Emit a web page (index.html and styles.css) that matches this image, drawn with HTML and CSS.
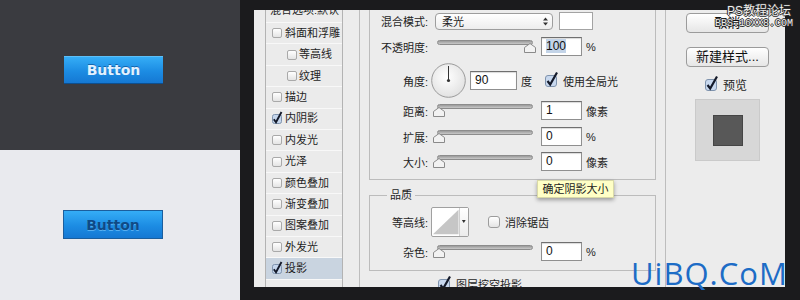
FILE: index.html
```html
<!DOCTYPE html>
<html lang="zh-CN">
<head>
    <meta charset="UTF-8">
    <meta name="viewport" content="width=device-width, initial-scale=1.0">
    <title>图层样式 - 投影</title>
    <link rel="stylesheet" href="styles.css">
</head>
<body>

<div class="page">

    <!-- Button previews -->
    <div class="demo">
        <div class="demo-dark"><button class="btn btn-dark">Button</button></div>
        <div class="demo-light"><button class="btn btn-light">Button</button></div>
    </div>

    <!-- Layer style dialog -->
    <div class="stage">
        <div class="dialog">

            <ul class="styles-list">
                <li class="list-head">混合选项:默认</li>
                <li><span class="cb"></span>斜面和浮雕</li>
                <li class="sub"><span class="cb"></span>等高线</li>
                <li class="sub"><span class="cb"></span>纹理</li>
                <li><span class="cb"></span>描边</li>
                <li><svg class="cb-on" width="10" height="10" viewBox="0 0 10 10"><rect x="0.5" y="0.5" width="9" height="9" rx="2" fill="#c5d6ec" stroke="#7f93ad"/><path d="M1.8 5.2 L4 8.2 L9.5 -2" fill="none" stroke="#141a2a" stroke-width="1.9"/></svg>内阴影</li>
                <li><span class="cb"></span>内发光</li>
                <li><span class="cb"></span>光泽</li>
                <li><span class="cb"></span>颜色叠加</li>
                <li><span class="cb"></span>渐变叠加</li>
                <li><span class="cb"></span>图案叠加</li>
                <li><span class="cb"></span>外发光</li>
                <li class="selected"><svg class="cb-on" width="10" height="10" viewBox="0 0 10 10"><rect x="0.5" y="0.5" width="9" height="9" rx="2" fill="#c5d6ec" stroke="#7f93ad"/><path d="M1.8 5.2 L4 8.2 L9.5 -2" fill="none" stroke="#141a2a" stroke-width="1.9"/></svg>投影</li>
                <li></li>
            </ul>

            <div class="vline"></div>

            <div class="main">
                <!-- 结构 -->
                <div class="group group-structure">
                    <div class="row row-mode">
                        <span class="label">混合模式:</span>
                        <div class="select">
                            <span>柔光</span>
                            <svg width="5" height="9" viewBox="0 0 5 9"><path d="M0 3.5 L2.5 0.5 L5 3.5 Z M0 5.5 L2.5 8.5 L5 5.5 Z" fill="#333"/></svg>
                        </div>
                        <span class="swatch"></span>
                    </div>
                    <div class="row row-opacity">
                        <span class="label">不透明度:</span>
                        <div class="slider">
                            <div class="track"></div>
                            <svg class="thumb thumb-end" width="12" height="10" viewBox="0 0 12 10"><path d="M0.5 9.5 V4.5 L6 0.5 L11.5 4.5 V9.5 Z" fill="#f2f2f2" stroke="#8a8a8a"/></svg>
                        </div>
                        <div class="field"><span class="selection">100</span></div>
                        <span class="unit">%</span>
                    </div>
                    <div class="row row-angle">
                        <span class="label">角度:</span>
                        <svg class="dial" width="35" height="35" viewBox="0 0 35 35">
                            <defs>
                                <radialGradient id="dialFill" cx="0.45" cy="0.4" r="0.6">
                                    <stop offset="0" stop-color="#ffffff"/>
                                    <stop offset="1" stop-color="#e2e2e2"/>
                                </radialGradient>
                            </defs>
                            <circle cx="17.5" cy="17.5" r="16.8" fill="url(#dialFill)" stroke="#9b9b9b"/>
                            <line x1="17.5" y1="17.5" x2="17.5" y2="3" stroke="#333" stroke-width="1"/>
                            <circle cx="17.5" cy="17.5" r="1.6" fill="#333"/>
                        </svg>
                        <div class="field field-angle">90</div>
                        <span class="unit">度</span>
                        <svg class="check check-global" width="13" height="13" viewBox="0 0 13 13"><rect x="0.5" y="1.5" width="11" height="11" rx="2.5" fill="#c8d8ee" stroke="#7f93ad"/><path d="M2.5 7 L5.2 10.5 L12 -1.5" fill="none" stroke="#141a2a" stroke-width="2.2"/></svg>
                        <span class="check-text">使用全局光</span>
                    </div>
                    <div class="row row-distance">
                        <span class="label">距离:</span>
                        <div class="slider">
                            <div class="track"></div>
                            <svg class="thumb" width="12" height="10" viewBox="0 0 12 10"><path d="M0.5 9.5 V4.5 L6 0.5 L11.5 4.5 V9.5 Z" fill="#f2f2f2" stroke="#8a8a8a"/></svg>
                        </div>
                        <div class="field">1</div>
                        <span class="unit">像素</span>
                    </div>
                    <div class="row row-spread">
                        <span class="label">扩展:</span>
                        <div class="slider">
                            <div class="track"></div>
                            <svg class="thumb" width="12" height="10" viewBox="0 0 12 10"><path d="M0.5 9.5 V4.5 L6 0.5 L11.5 4.5 V9.5 Z" fill="#f2f2f2" stroke="#8a8a8a"/></svg>
                        </div>
                        <div class="field">0</div>
                        <span class="unit">%</span>
                    </div>
                    <div class="row row-size">
                        <span class="label">大小:</span>
                        <div class="slider">
                            <div class="track"></div>
                            <svg class="thumb" width="12" height="10" viewBox="0 0 12 10"><path d="M0.5 9.5 V4.5 L6 0.5 L11.5 4.5 V9.5 Z" fill="#f2f2f2" stroke="#8a8a8a"/></svg>
                        </div>
                        <div class="field">0</div>
                        <span class="unit">像素</span>
                    </div>
                </div>

                <!-- 品质 -->
                <div class="group group-quality">
                    <span class="legend">品质</span>
                    <div class="row row-contour">
                        <span class="label">等高线:</span>
                        <div class="contour">
                            <svg width="29" height="28" viewBox="0 0 29 28"><path d="M1 27 L28 1 V27 Z" fill="#c6c6c6"/></svg>
                            <svg class="contour-arrow" width="8" height="28" viewBox="0 0 8 28"><path d="M2 12 H6 L4 15 Z" fill="#333"/></svg>
                        </div>
                        <span class="cb cb-main"></span>
                        <span class="check-text">消除锯齿</span>
                    </div>
                    <div class="row row-noise">
                        <span class="label">杂色:</span>
                        <div class="slider">
                            <div class="track"></div>
                            <svg class="thumb" width="12" height="10" viewBox="0 0 12 10"><path d="M0.5 9.5 V4.5 L6 0.5 L11.5 4.5 V9.5 Z" fill="#f2f2f2" stroke="#8a8a8a"/></svg>
                        </div>
                        <div class="field">0</div>
                        <span class="unit">%</span>
                    </div>
                </div>

                <div class="knockout">
                    <svg class="check" width="13" height="13" viewBox="0 0 13 13"><rect x="0.5" y="1.5" width="11" height="11" rx="2.5" fill="#c8d8ee" stroke="#7f93ad"/><path d="M2.5 7 L5.2 10.5 L12 -1.5" fill="none" stroke="#141a2a" stroke-width="2.2"/></svg>
                    <span class="check-text">图层挖空投影</span>
                </div>

                <div class="tooltip">确定阴影大小</div>
            </div>

            <div class="vline"></div>

            <div class="side">
                <button class="side-btn">取消</button>
                <button class="side-btn">新建样式...</button>
                <div class="preview-check">
                    <svg class="check" width="13" height="13" viewBox="0 0 13 13"><rect x="0.5" y="1.5" width="11" height="11" rx="2.5" fill="#c8d8ee" stroke="#7f93ad"/><path d="M2.5 7 L5.2 10.5 L12 -1.5" fill="none" stroke="#141a2a" stroke-width="2.2"/></svg>
                    <span class="check-text">预览</span>
                </div>
                <div class="preview-box"><div class="preview-swatch"></div></div>
            </div>
        </div>

        <div class="mark-top">
            <div class="mark-title">PS教程论坛</div>
            <div class="mark-url">BBS.16XX8.COM</div>
        </div>
        <div class="mark-bottom">UiBQ.CoM</div>
    </div>

</div>

</body>
</html>
```

FILE: styles.css
```css
body {
    margin: 0;
    font-family: "Liberation Sans", "Noto Sans CJK SC", sans-serif;
    font-size: 11px;
    color: #1e1e1e;
}
.page {
    display: flex;
    width: 800px;
    height: 300px;
    overflow: hidden;
}

/* left: button previews */
.demo {
    width: 240px;
    flex-shrink: 0;
}
.demo-dark {
    height: 150px;
    box-sizing: border-box;
    padding: 56px 0 0 64px;
    background: #3a3b40;
}
.demo-light {
    height: 150px;
    box-sizing: border-box;
    padding: 60px 0 0 63px;
    background: #e9eaee;
}
.btn {
    display: block;
    padding: 0;
    font: bold 14px "DejaVu Sans", sans-serif;
    background: linear-gradient(#35adf6, #1c8ce3 55%, #1578d3);
    cursor: pointer;
}
.btn-dark {
    width: 99px;
    height: 28px;
    color: #e2f1ff;
    border: none;
    border-top: 1px solid #5dbff8;
    border-bottom: 1px solid #0d4f8f;
    text-shadow: 0 -1px 0 rgba(0, 50, 110, 0.5);
}
.btn-light {
    width: 100px;
    height: 29px;
    color: #0f4a86;
    border: 1px solid #1b5e9d;
    text-shadow: 0 1px 0 rgba(130, 205, 255, 0.6);
}

/* right: dialog */
.stage {
    position: relative;
    width: 560px;
    height: 300px;
    box-sizing: border-box;
    padding: 10px 15px 13px 14px;
    background: #1b1b1d;
}
.dialog {
    display: flex;
    height: 277px;
    background: #ececec;
    overflow: hidden;
}
.styles-list {
    list-style: none;
    width: 78px;
    margin: -9px 16px 0 11px;
    padding: 0;
    box-sizing: border-box;
    flex-shrink: 0;
    background: #ebebeb;
    border-left: 1px solid #b3b3b3;
    border-right: 1px solid #b3b3b3;
}
.styles-list li {
    display: flex;
    align-items: center;
    gap: 3px;
    height: 21.42px;
    box-sizing: border-box;
    padding-left: 6px;
    border-bottom: 1px solid #f8f8f8;
    line-height: 13px;
    white-space: nowrap;
}
.styles-list li.list-head {
    align-items: flex-start;
    height: 22px;
    padding: 3px 0 0 4px;
}
.styles-list li.sub {
    padding-left: 21px;
    gap: 2px;
}
.styles-list li.selected {
    background: #c9d4e0;
}
.cb {
    display: inline-block;
    width: 10px;
    height: 10px;
    box-sizing: border-box;
    border: 1px solid #a9a9a9;
    border-radius: 2px;
    background: linear-gradient(#ffffff, #e4e4e4);
    flex-shrink: 0;
}
.cb-on {
    overflow: visible;
    flex-shrink: 0;
}
.vline {
    width: 1px;
    flex-shrink: 0;
    background: #bdbdbd;
}

.main {
    position: relative;
    width: 305px;
    box-sizing: border-box;
    padding: 0 9px;
    flex-shrink: 0;
}
.group {
    border: 1px solid #bcbcbc;
}
.group-structure {
    border-top: none;
    padding: 2px 0 8px;
}
.row {
    display: flex;
    align-items: center;
    height: 19px;
    white-space: nowrap;
}
.row-mode { height: 18px; }
.row-opacity { margin-top: 7px; }
.row-angle { height: 35px; margin-top: 7px; }
.row-distance { margin-top: 3px; }
.row-spread { margin-top: 7px; }
.row-size { margin-top: 6px; }
.label {
    width: 58px;
    margin-right: 3px;
    text-align: right;
    flex-shrink: 0;
}
.select {
    display: flex;
    align-items: center;
    justify-content: space-between;
    width: 118px;
    height: 17px;
    box-sizing: border-box;
    margin-left: 4px;
    padding: 0 4px 0 6px;
    border: 1px solid #9d9d9d;
    border-radius: 4px;
    background: linear-gradient(#ffffff, #ededed);
}
.swatch {
    width: 34px;
    height: 18px;
    box-sizing: border-box;
    margin-left: 6px;
    border: 1px solid #a3a3a3;
    background: #ffffff;
}
.slider {
    position: relative;
    width: 104px;
    height: 14px;
    margin-left: 2px;
    flex-shrink: 0;
}
.track {
    width: 96px;
    height: 5px;
    margin-left: 4px;
    box-sizing: border-box;
    border: 1px solid #8c8c8c;
    border-radius: 3px;
    background: linear-gradient(#9a9a9a, #c9c9c9);
}
.thumb {
    position: absolute;
    left: 0;
    top: 3px;
}
.thumb-end {
    left: 91px;
}
.field {
    width: 41px;
    height: 19px;
    box-sizing: border-box;
    margin-left: 4px;
    padding-left: 4px;
    border: 1px solid #8f8f8f;
    border-top-color: #6f6f6f;
    background: #ffffff;
    box-shadow: inset 0 1px 1px rgba(0, 0, 0, 0.15);
    font-size: 12px;
    line-height: 17px;
    color: #111;
}
.field-angle {
    width: 47px;
}
.selection {
    background: #c3d4e8;
}
.unit {
    margin-left: 4px;
}
.dial {
    flex-shrink: 0;
}
.check-global {
    margin-left: 13px;
}
.check {
    overflow: visible;
    flex-shrink: 0;
}
.check-text {
    margin-left: 5px;
}

.group-quality {
    position: relative;
    margin-top: 15px;
    padding: 11px 0 9px;
}
.legend {
    position: absolute;
    top: -8px;
    left: 17px;
    padding: 0 3px;
    line-height: 14px;
    background: #ececec;
}
.row-contour {
    height: 30px;
}
.row-noise {
    margin-top: 5px;
}
.contour {
    display: flex;
    width: 38px;
    height: 30px;
    box-sizing: border-box;
    border: 1px solid #a0a0a0;
    border-radius: 2px;
    background: #ffffff;
    flex-shrink: 0;
}
.contour-arrow {
    border-left: 1px solid #cfcfcf;
    background: linear-gradient(#ffffff, #ececec);
}
.cb-main {
    width: 12px;
    height: 12px;
    margin-left: 19px;
    border-color: #9c9c9c;
    border-radius: 3px;
}
.knockout {
    display: flex;
    align-items: center;
    height: 16px;
    margin: 5px 0 0 69px;
}
.tooltip {
    position: absolute;
    left: 177px;
    top: 170px;
    width: 77px;
    height: 18px;
    box-sizing: border-box;
    border: 1px solid #d9d9a8;
    background: #ffffc6;
    box-shadow: 0 2px 4px rgba(0, 0, 0, 0.35);
    text-align: center;
    line-height: 16px;
    color: #222;
}

.side {
    width: 119px;
    box-sizing: border-box;
    padding: 3px 0 0 20px;
    flex-shrink: 0;
}
.side-btn {
    display: block;
    width: 83px;
    height: 20px;
    margin-bottom: 14px;
    padding: 0;
    border: 1px solid #9b9b9b;
    border-radius: 4px;
    background: linear-gradient(#ffffff, #e6e6e6);
    font-family: "Liberation Sans", "Noto Sans CJK SC", sans-serif;
    font-size: 13px;
    line-height: 18px;
    color: #111;
}
.preview-check {
    display: flex;
    align-items: center;
    height: 14px;
    margin: -4px 0 0 19px;
    font-size: 12px;
}
.preview-box {
    display: flex;
    align-items: center;
    justify-content: center;
    width: 65px;
    height: 62px;
    box-sizing: border-box;
    margin: 8px 0 0 9px;
    border: 1px solid #cacaca;
    background: #d7d7d7;
}
.preview-swatch {
    width: 30px;
    height: 31px;
    box-sizing: border-box;
    border: 1px solid #454545;
    background: #585858;
}

/* watermarks */
.mark-top {
    position: absolute;
    left: 475px;
    top: 5px;
    color: #eeeeee;
    text-shadow: 1px 0 #2a2a2a, -1px 0 #2a2a2a, 0 1px #2a2a2a, 0 -1px #2a2a2a;
}
.mark-title {
    padding-left: 12px;
    font-size: 12px;
    line-height: 13px;
}
.mark-url {
    font: 10px "Liberation Mono", monospace;
    line-height: 11px;
}
.mark-bottom {
    position: absolute;
    left: 391px;
    top: 258px;
    font: 31px "Open Sans", sans-serif;
    line-height: 31px;
    letter-spacing: 1px;
    color: #1d6cc6;
}
```
